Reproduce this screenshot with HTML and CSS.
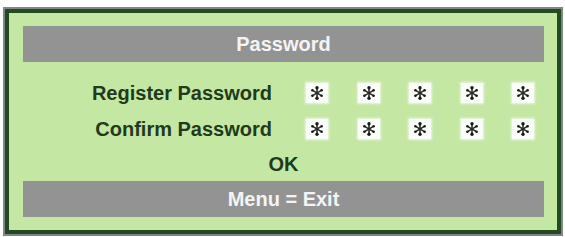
FILE: index.html
```html
<!DOCTYPE html>
<html lang="en">

<head>
    <meta charset="UTF-8">
    <meta name="viewport" content="width=device-width, initial-scale=1.0">
    <title>Password</title>
    <link rel="stylesheet" href="styles.css">
</head>

<body>
    <svg width="0" height="0" class="defs">
        <symbol id="star" viewBox="0 0 14 14">
            <g stroke="#2b2b2b" stroke-width="1.6" stroke-linecap="round">
                <line x1="7" y1="2" x2="7" y2="12" />
                <line x1="2.6" y1="4.4" x2="11.4" y2="9.6" />
                <line x1="2.6" y1="9.6" x2="11.4" y2="4.4" />
            </g>
            <g fill="#1a1a1a">
                <circle cx="7" cy="1.7" r="1.7" />
                <circle cx="7" cy="12.3" r="1.7" />
                <circle cx="2.4" cy="4.3" r="1.3" />
                <circle cx="11.6" cy="4.3" r="1.3" />
                <circle cx="2.4" cy="9.7" r="1.3" />
                <circle cx="11.6" cy="9.7" r="1.3" />
            </g>
        </symbol>
    </svg>

    <div class="frame">
        <div class="panel">
            <div class="bar">Password</div>

            <div class="row first">
                <span class="label">Register Password</span>
                <div class="stars">
                    <span class="cell"><svg><use href="#star" /></svg></span>
                    <span class="cell"><svg><use href="#star" /></svg></span>
                    <span class="cell"><svg><use href="#star" /></svg></span>
                    <span class="cell"><svg><use href="#star" /></svg></span>
                    <span class="cell"><svg><use href="#star" /></svg></span>
                </div>
            </div>

            <div class="row">
                <span class="label">Confirm Password</span>
                <div class="stars">
                    <span class="cell"><svg><use href="#star" /></svg></span>
                    <span class="cell"><svg><use href="#star" /></svg></span>
                    <span class="cell"><svg><use href="#star" /></svg></span>
                    <span class="cell"><svg><use href="#star" /></svg></span>
                    <span class="cell"><svg><use href="#star" /></svg></span>
                </div>
            </div>

            <div class="ok">OK</div>

            <div class="bar">Menu = Exit</div>
        </div>
    </div>
</body>

</html>
```

FILE: styles.css
```css
* {
    margin: 0;
    padding: 0;
    box-sizing: border-box;
}

body {
    width: 565px;
    height: 237px;
    background: #fdfdfd;
    font-family: "Liberation Sans", Arial, sans-serif;
    font-weight: bold;
    overflow: hidden;
}

.defs {
    position: absolute;
}

.frame {
    margin: 7px 2px 0 3px;
    width: 560px;
    height: 229px;
    border: 2px solid #858585;
}

.panel {
    height: 100%;
    border: 4px solid #234b23;
    background: #c4e7a4;
    padding: 13px 13px 13px 14px;
    display: flex;
    flex-direction: column;
}

.bar {
    height: 36px;
    background: #939393;
    color: #f4f4f4;
    font-size: 20px;
    line-height: 36px;
    text-align: center;
}

.row {
    height: 36px;
    display: flex;
    align-items: center;
    color: #223a1c;
    font-size: 20px;
}

.row.first {
    margin-top: 13px;
}

.label {
    width: 249px;
    text-align: right;
}

.stars {
    display: flex;
    gap: 29.5px;
    margin-left: 34px;
}

.cell {
    width: 22px;
    height: 20px;
    background: #fbfdf8;
    box-shadow: 0 0 2px 1px #eef6e6;
    display: flex;
    justify-content: center;
    align-items: center;
}

.cell svg {
    width: 14px;
    height: 14px;
}

.ok {
    flex: 1;
    display: flex;
    justify-content: center;
    align-items: center;
    color: #223a1c;
    font-size: 20px;
}
```
